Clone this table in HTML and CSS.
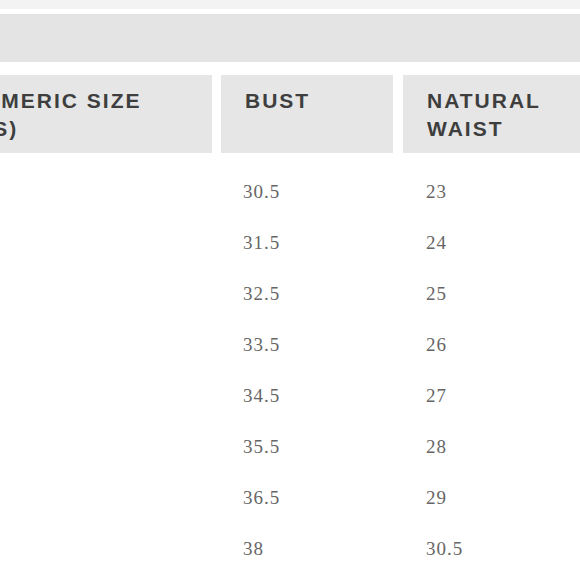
FILE: index.html
```html
<!DOCTYPE html>
<html>
<head>
<meta charset="utf-8">
<link rel="stylesheet" href="styles.css">
</head>
<body>
<div class="page">
  <div class="top-strip"></div>
  <div class="title-bar"></div>
  <div class="chart">
    <div class="row head">
      <div class="cell hcell">NUMERIC SIZE<br>(US)</div>
      <div class="cell hcell">BUST</div>
      <div class="cell hcell">NATURAL<br>WAIST</div>
    </div>
    <div class="row data"><div class="cell"></div><div class="cell">30.5</div><div class="cell">23</div></div>
    <div class="row data"><div class="cell"></div><div class="cell">31.5</div><div class="cell">24</div></div>
    <div class="row data"><div class="cell"></div><div class="cell">32.5</div><div class="cell">25</div></div>
    <div class="row data"><div class="cell"></div><div class="cell">33.5</div><div class="cell">26</div></div>
    <div class="row data"><div class="cell"></div><div class="cell">34.5</div><div class="cell">27</div></div>
    <div class="row data"><div class="cell"></div><div class="cell">35.5</div><div class="cell">28</div></div>
    <div class="row data"><div class="cell"></div><div class="cell">36.5</div><div class="cell">29</div></div>
    <div class="row data"><div class="cell"></div><div class="cell">38</div><div class="cell">30.5</div></div>
  </div>
</div>
</body>
</html>
```

FILE: styles.css
```css
html, body {
  margin: 0;
  padding: 0;
  background: #ffffff;
}
.page {
  width: 580px;
  height: 580px;
  overflow: hidden;
}
.top-strip {
  height: 9px;
  background: #f3f3f3;
}
.title-bar {
  margin-top: 5px;
  height: 48px;
  background: #e4e4e4;
}
.chart {
  margin-top: 13px;
  margin-left: -57px;
  width: 720px;
}
.row {
  display: grid;
  grid-template-columns: 269px 172px 1fr;
  column-gap: 9px;
}
.cell {
  padding-left: 24px;
}
.hcell {
  background: #e6e6e6;
  padding-top: 12px;
  padding-bottom: 10px;
  font-family: "Liberation Sans", Arial, sans-serif;
  font-weight: bold;
  font-size: 21px;
  line-height: 28px;
  letter-spacing: 2px;
  color: #3e3e3e;
}
.head .hcell:nth-child(3) {
  margin-left: 1px;
}
.data {
  height: 51px;
  align-items: center;
  font-family: "Liberation Serif", "Times New Roman", serif;
  font-size: 19px;
  letter-spacing: 1px;
  color: #666666;
}
.data .cell:nth-child(2) {
  padding-left: 22px;
}
.head + .data {
  margin-top: 13px;
}
```
